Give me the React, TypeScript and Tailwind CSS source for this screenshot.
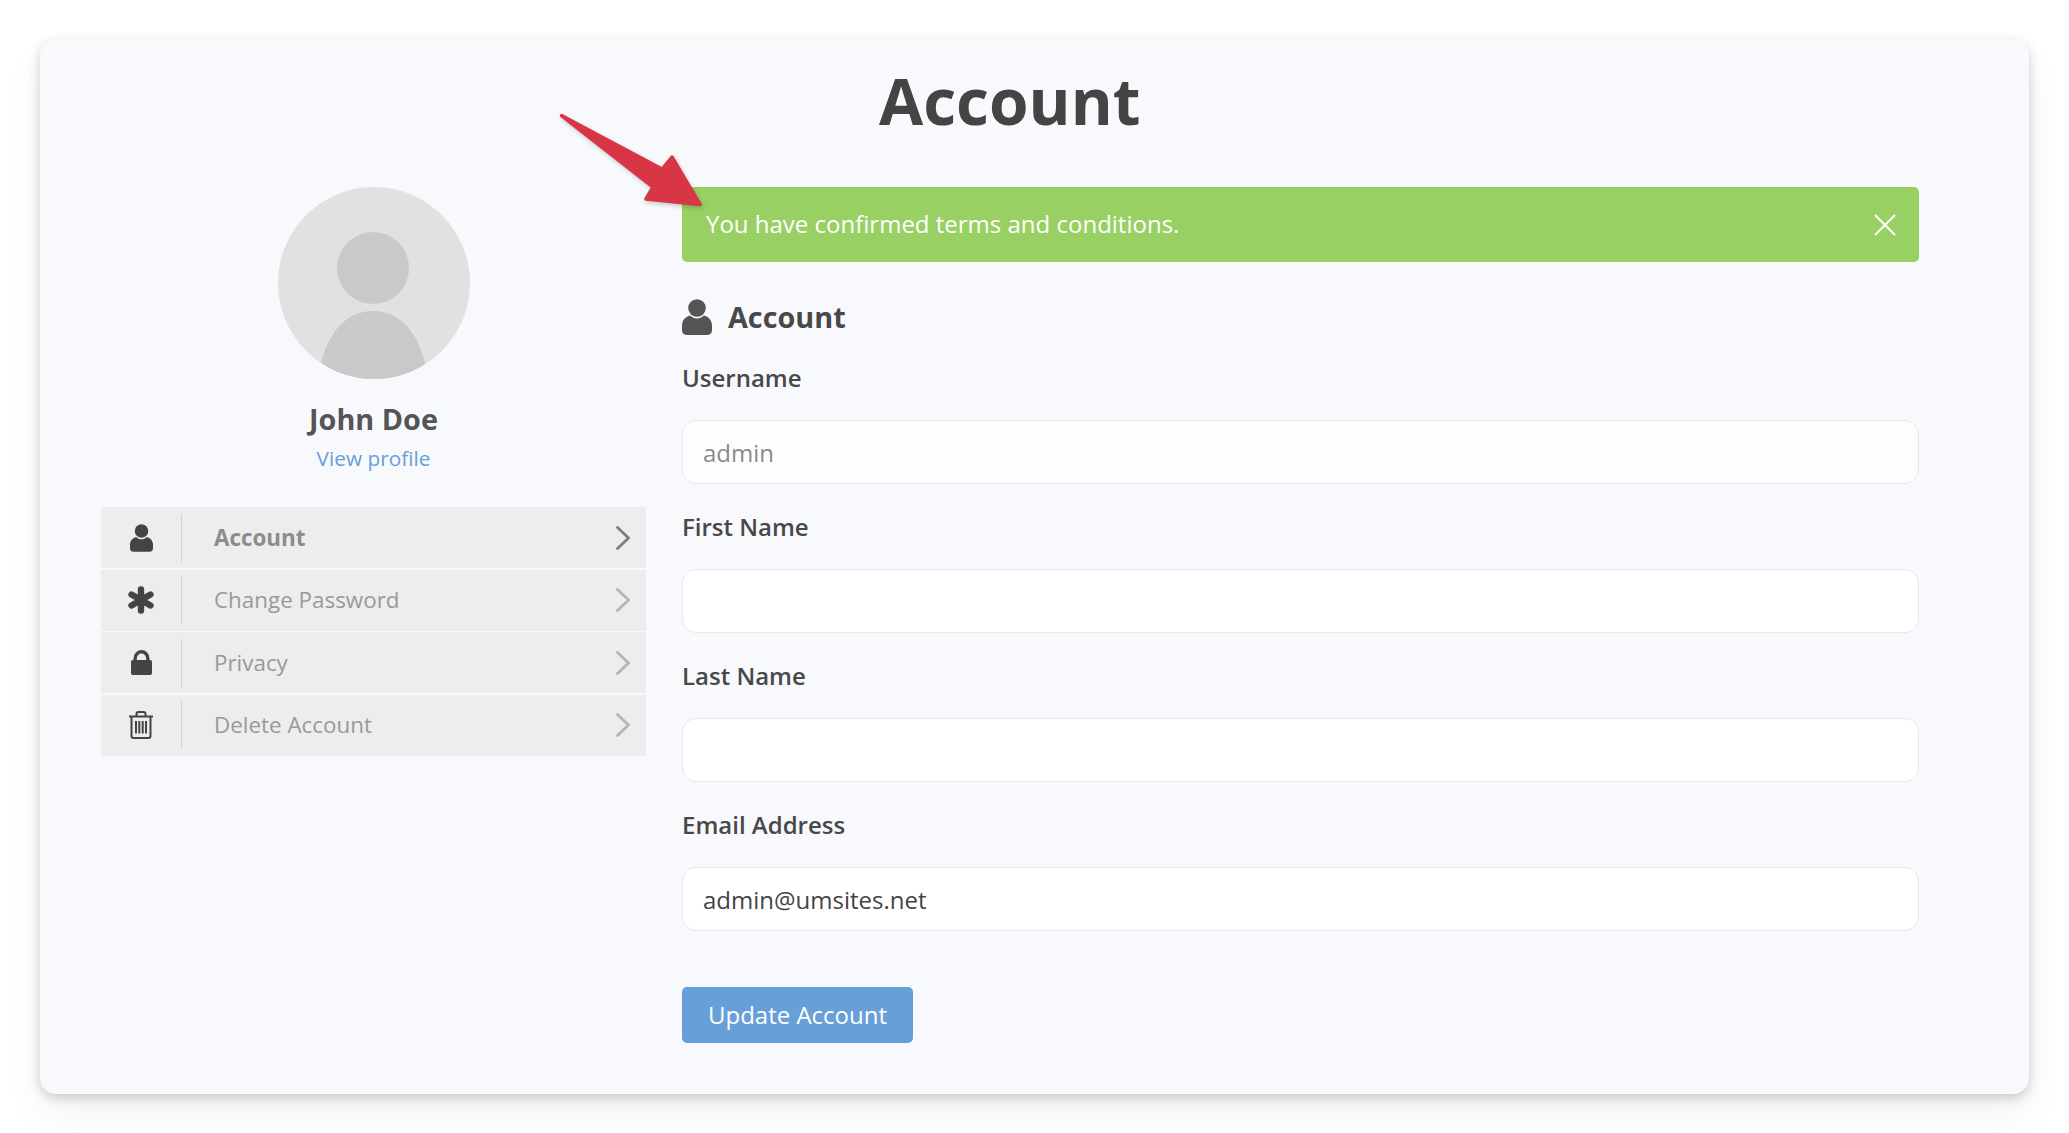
const font = { fontFamily: '"Open Sans", sans-serif' };

function UserIcon({ className }: { className?: string }) {
  return (
    <svg viewBox="0 0 30 36" className={className} fill="currentColor">
      <circle cx="15" cy="9" r="8.8" />
      <path d="M8.2 16.6C10 18.6 12.3 19.6 15 19.6s5-1 6.8-3c4.6 1.2 8.2 4.4 8.2 10.4v4.6c0 2.6-2 4.4-4.4 4.4H4.4C2 36 0 34.200 0 31.600V27c0-6 3.600-9.200 8.200-10.400z" />
    </svg>
  );
}

function StarIcon({ className }: { className?: string }) {
  return (
    <svg viewBox="0 0 26 28" className={className} fill="none" stroke="currentColor" strokeWidth="6.4" strokeLinecap="round">
      <path d="M13 3.500V24.500M3.500 8.500L22.500 19.500M22.500 8.500L3.500 19.500" />
    </svg>
  );
}

function LockIcon({ className }: { className?: string }) {
  return (
    <svg viewBox="0 0 21 25" className={className} fill="currentColor">
      <path fillRule="evenodd" d="M2.500 10V8.500a8 8.500 0 0 1 16 0V10h.8a1.700 1.700 0 0 1 1.700 1.700v11.600a1.700 1.700 0 0 1-1.700 1.700H1.700A1.700 1.700 0 0 1 0 23.300V11.700A1.700 1.700 0 0 1 1.700 10zm3.300 0h9.400V8.500a4.700 5 0 0 0-9.400 0z" />
    </svg>
  );
}

function TrashIcon({ className }: { className?: string }) {
  return (
    <svg viewBox="0 0 26 28" className={className} fill="none" stroke="currentColor">
      <path strokeWidth="2" d="M1 5.500H25M8.500 5V3a2 2 0 0 1 2-2h5a2 2 0 0 1 2 2v2M3.500 5.500V25a2 2 0 0 0 2 2h15a2 2 0 0 0 2-2V5.500" />
      <path strokeWidth="2" d="M8 10V22.500M11.300 10V22.500M14.700 10V22.500M18 10V22.500" />
    </svg>
  );
}

function Chevron({ active }: { active?: boolean }) {
  return (
    <svg viewBox="0 0 14 24" className={`w-[14px] h-[24px] ${active ? "text-[#7d7d7d]" : "text-[#b5b5b5]"}`} fill="none" stroke="currentColor" strokeWidth="2.800" strokeLinecap="round">
      <path d="M1.500 1.500L12.500 12L1.500 22.500" />
    </svg>
  );
}

function Row({ icon, label, active }: { icon: React.ReactNode; label: string; active?: boolean }) {
  return (
    <div className="flex items-center bg-[#ededed] h-[61px]">
      <div className="w-[80px] flex justify-center text-[#444444]">{icon}</div>
      <div className="w-px h-[48px] bg-[#d2d2d2]" />
      <div className={`flex-1 pl-[32px] text-[22.4px] ${active ? "font-bold text-[#8c8c8c]" : "text-[#999999]"}`}>{label}</div>
      <div className="pr-[16px] flex items-center"><Chevron active={active} /></div>
    </div>
  );
}

function Field({ label, value, muted, className }: { label: string; value?: string; muted?: boolean; className?: string }) {
  return (
    <div className={className}>
      <div className="h-[32px] leading-[34px] text-[24px] font-semibold text-[#484848]">{label}</div>
      <div className={`mt-[27px] h-[64px] rounded-[14px] border border-[#e8e8ec] flex items-center px-[20px] pt-px text-[24px] ${muted ? "bg-[#fdfdfe] text-[#8a8a8a]" : "bg-white text-[#444444]"}`}>
        {value}
      </div>
    </div>
  );
}

export default function App() {
  return (
    <div className="min-h-[1133px] bg-white pt-[39px] px-[40px]" style={font}>
      <div className="relative h-[1055px] w-[1989px] rounded-[16px] bg-[#f8f9fd] shadow-[0_4px_12px_rgba(0,0,0,0.18),0_20px_40px_rgba(0,0,0,0.05)]">
        <div className="h-[148px] pl-[839px] pt-[12px] text-[64px] leading-[100px] font-bold text-[#444444]">Account</div>
        <div className="flex">
          <div className="ml-[61px] w-[545px]">
            <div className="flex flex-col items-center">
              <svg viewBox="0 0 192 192" className="w-[192px] h-[192px]">
                <defs>
                  <clipPath id="avatarClip"><circle cx="96" cy="96" r="96" /></clipPath>
                </defs>
                <circle cx="96" cy="96" r="96" fill="#e1e1e1" />
                <g clipPath="url(#avatarClip)" fill="#c9c9c9">
                  <ellipse cx="95" cy="81" rx="36" ry="36" />
                  <path d="M42 180C50 145 68 124 95 124s45 21 53 56l0 20H42z" />
                </g>
              </svg>
              <div className="mt-[22px] text-[28.8px] leading-[36px] font-bold text-[#555555]">John Doe</div>
              <div className="mt-[6px] text-[20.8px] leading-[30px] text-[#679fd8]">View profile</div>
            </div>
            <div className="mt-[34px] flex flex-col gap-[1.5px]">
              <Row active label="Account" icon={<UserIcon className="w-[23px] h-[28px]" />} />
              <Row label="Change Password" icon={<StarIcon className="w-[26px] h-[28px]" />} />
              <Row label="Privacy" icon={<LockIcon className="w-[21px] h-[25px]" />} />
              <Row label="Delete Account" icon={<TrashIcon className="w-[26px] h-[28px]" />} />
            </div>
          </div>
          <div className="ml-[36px] w-[1237px]">
            <div className="h-[75px] rounded-[5px] bg-[#98d063] flex items-center justify-between pl-[24px] pr-[23px] text-[24px] text-white">
              <span className="pb-[2px]">You have confirmed terms and conditions.</span>
              <svg viewBox="0 0 22 22" className="w-[22px] h-[22px]" fill="none" stroke="white" strokeWidth="2">
                <path d="M1 1L21 21M21 1L1 21" />
              </svg>
            </div>
            <div className="mt-[37px] h-[36px] flex items-center text-[#484848]">
              <UserIcon className="w-[30px] h-[36px] text-[#555555]" />
              <span className="ml-[16px] text-[28.8px] font-bold">Account</span>
            </div>
            <Field className="mt-[26px]" label="Username" value="admin" muted />
            <Field className="mt-[26px]" label="First Name" />
            <Field className="mt-[26px]" label="Last Name" />
            <Field className="mt-[26px]" label="Email Address" value="admin@umsites.net" />
            <div className="mt-[56px] w-[231px] h-[56px] rounded-[5px] bg-[#679fd8] flex items-center justify-center text-[24px] text-white">Update Account</div>
          </div>
        </div>
        <svg viewBox="0 0 180 130" className="absolute left-[520px] top-[61px] w-[180px] h-[130px] drop-shadow-[1px_2px_2px_rgba(0,0,0,0.2)]" fill="#d93645" stroke="#d93645" strokeWidth="3.500" strokeLinejoin="round" strokeLinecap="round">
          <path d="M1.500 15.500L102 69L112 57L140 104.500L86 99L93 87Z" />
        </svg>
      </div>
    </div>
  );
}
